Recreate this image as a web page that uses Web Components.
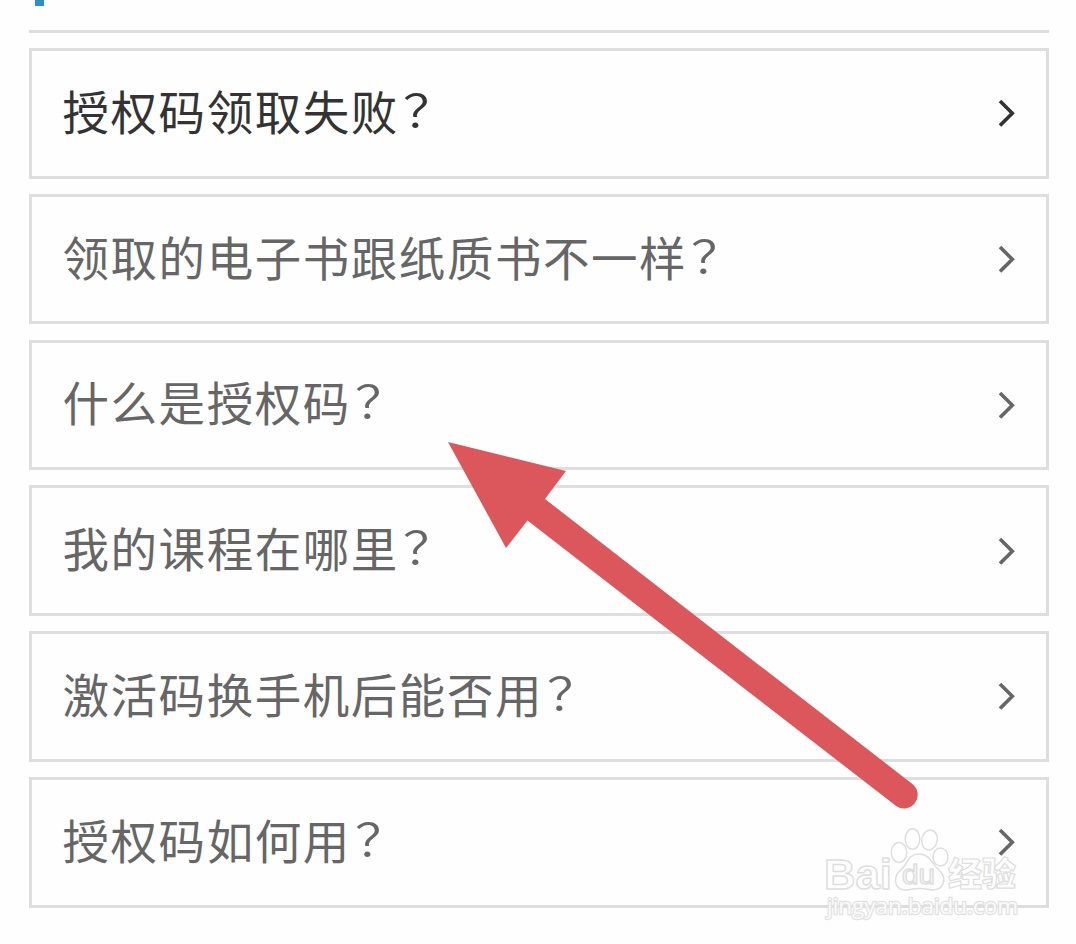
<!DOCTYPE html>
<html lang="zh-CN">
<head>
<meta charset="utf-8">
<title>常见问题</title>
<style>
    body {
        margin: 0;
        background: #fefefe;
        font-family: "Noto Sans CJK SC", sans-serif;
    }
</style>
</head>
<body>
<help-page>
    <faq-list>
        <faq-item active>授权码领取失败</faq-item>
        <faq-item>领取的电子书跟纸质书不一样</faq-item>
        <faq-item>什么是授权码</faq-item>
        <faq-item>我的课程在哪里</faq-item>
        <faq-item>激活码换手机后能否用</faq-item>
        <faq-item>授权码如何用</faq-item>
    </faq-list>
    <pointer-arrow slot="overlay"></pointer-arrow>
    <site-watermark slot="overlay"></site-watermark>
</help-page>

<script>
class HelpPage extends HTMLElement {
    constructor() {
        super();
        this.shadowDOM = this.attachShadow({mode: "open"});
        this.shadowDOM.innerHTML = `
        <style>
        :host {
            display: block;
            position: relative;
            box-sizing: border-box;
            width: 1076px;
            height: 944px;
            padding: 0 27px 0 29px;
            overflow: hidden;
        }
        header {
            box-sizing: border-box;
            height: 33px;
            padding-left: 6px;
            border-bottom: 3px solid #dedede;
        }
        .marker {
            width: 9px;
            height: 6px;
            background: #2a8fc7;
        }
        </style>
        <header><div class="marker"></div></header>
        <slot></slot>
        <slot name="overlay"></slot>`;
    }
}

class FaqList extends HTMLElement {
    constructor() {
        super();
        this.shadowDOM = this.attachShadow({mode: "open"});
        this.shadowDOM.innerHTML = `
        <style>
        :host {
            display: flex;
            flex-direction: column;
            gap: 15.1px;
            padding-top: 15px;
        }
        </style>
        <slot></slot>`;
    }
}

class FaqItem extends HTMLElement {
    constructor() {
        super();
        this.shadowDOM = this.attachShadow({mode: "open"});
        // every entry is a question, so the mark is part of the item
        this.shadowDOM.innerHTML = `
        <style>
        :host {
            display: flex;
            align-items: center;
            justify-content: space-between;
            box-sizing: border-box;
            height: 130.700px;
            padding: 0 30px;
            border: 3px solid #dedede;
            color: #666;
            font-size: 46.500px;
            font-weight: 400;
            letter-spacing: 1.550px;
            line-height: 70px;
            white-space: nowrap;
        }
        :host([active]) {
            color: #333;
        }
        .question {
            padding-left: 0.500px;
            padding-bottom: 7px;
        }
        .mark {
            display: inline-block;
            font-weight: 350;
            transform: translate(7px, -1px) scale(1.12, 0.97);
        }
        svg {
            flex: none;
            width: 18px;
            height: 28px;
        }
        </style>
        <span class="question"><slot></slot><span class="mark">？</span></span>
        <svg viewBox="0 0 18 28" fill="none" stroke="currentColor" stroke-width="3.6">
            <path d="M2 2 14.300 14.300 2 26.600"/>
        </svg>`;
    }
}

class PointerArrow extends HTMLElement {
    constructor() {
        super();
        this.shadowDOM = this.attachShadow({mode: "open"});
        this.shadowDOM.innerHTML = `
        <style>
        :host {
            position: absolute;
            left: 440px;
            top: 435px;
        }
        svg {
            display: block;
        }
        </style>
        <svg width="490" height="380" viewBox="440 435 490 380">
            <path fill="#db575c" d="M448 442 566 471 545 499 913 784.500A13.700 13.700 0 0 1 896.500 806.300L527.500 520.500 506 548Z"/>
        </svg>`;
    }
}

class SiteWatermark extends HTMLElement {
    constructor() {
        super();
        this.shadowDOM = this.attachShadow({mode: "open"});
        this.shadowDOM.innerHTML = `
        <style>
        :host {
            position: absolute;
            left: 816px;
            top: 820px;
        }
        svg {
            display: block;
        }
        text, .paw {
            fill: rgba(255, 255, 255, 0.6);
            stroke: #dedede;
            stroke-width: 1.5;
            stroke-linejoin: round;
        }
        .brand {
            font: bold 43px "Liberation Sans", sans-serif;
        }
        .du {
            font: 27px "Liberation Sans", sans-serif;
        }
        .name {
            font: 900 33px "Noto Sans CJK SC", sans-serif;
            stroke-width: 1.2;
        }
        .url {
            font: 400 22px "Open Sans", sans-serif;
            paint-order: stroke;
            stroke: #e2e2e2;
            stroke-width: 2.4;
            fill: rgba(255, 255, 255, 0.85);
        }
        </style>
        <svg width="220" height="110" viewBox="816 820 220 110">
            <text class="brand" x="824" y="888.500" textLength="68" lengthAdjust="spacingAndGlyphs">Bai</text>
            <g class="paw">
                <ellipse cx="899" cy="852.500" rx="7.700" ry="10"/>
                <ellipse cx="912.500" cy="839" rx="7.300" ry="10.300"/>
                <ellipse cx="929.500" cy="840" rx="7.700" ry="10" transform="rotate(12 929.500 840)"/>
                <ellipse cx="940.500" cy="857" rx="7.500" ry="9"/>
                <path d="M919 854C928 854 931 861 936 867C941 872 945 875 943.500 882C942 889 935 891 929 889.500C922 888 917 888 910 889.500C903 891 896 889 895.500 881C895 873 901 871 905 865C909 859 911 854 919 854Z"/>
            </g>
            <text class="du" x="902" y="884" textLength="33" lengthAdjust="spacingAndGlyphs">du</text>
            <text class="name" x="948" y="886" textLength="68" lengthAdjust="spacingAndGlyphs">经验</text>
            <text class="url" x="827" y="914" textLength="191" lengthAdjust="spacingAndGlyphs">jingyan.baidu.com</text>
        </svg>`;
    }
}

customElements.define("help-page", HelpPage);
customElements.define("faq-list", FaqList);
customElements.define("faq-item", FaqItem);
customElements.define("pointer-arrow", PointerArrow);
customElements.define("site-watermark", SiteWatermark);
</script>
</body>
</html>
